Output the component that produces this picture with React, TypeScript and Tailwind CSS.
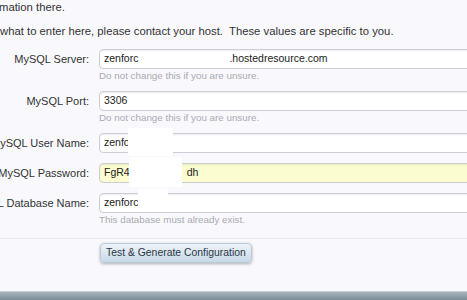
const rows = [
  { label: "MySQL Server:", hint: "Do not change this if you are unsure." },
  { label: "MySQL Port:", hint: "Do not change this if you are unsure." },
  { label: "MySQL User Name:" },
  { label: "MySQL Password:" },
  { label: "MySQL Database Name:", hint: "This database must already exist." },
];

function FieldValue({ index }: { index: number }) {
  if (index === 0) {
    return (
      <>
        <span>zenforc</span>
        <span className="ml-[91px]">.hostedresource.com</span>
      </>
    );
  }
  if (index === 1) return <span>3306</span>;
  if (index === 2) return <span>zenforc</span>;
  if (index === 3) {
    return (
      <>
        <span>FgR4</span>
        <span className="ml-[57px]">dh</span>
      </>
    );
  }
  return <span>zenforc</span>;
}

export default function App() {
  return (
    <div
      className="relative w-[467px] h-[300px] overflow-hidden bg-[#f9f9fd] text-[#333] flex flex-col"
      style={{ fontFamily: '"Liberation Sans", Arial, sans-serif' }}
    >
      <p className="text-[11.3px] leading-[13px] pt-[1px] -ml-[1px] whitespace-nowrap">mation there.</p>
      <p className="text-[11.3px] leading-[13px] mt-[11px] whitespace-nowrap">
        what to enter here, please contact your host.&nbsp; These values are specific to you.
      </p>

      <div className="flex flex-col gap-[10px] mt-[11px]">
        {rows.map((row, i) => (
          <div key={row.label} className="flex items-start">
            <div className="w-[90px] shrink-0 flex justify-end h-[20px] items-center pr-[1px]">
              <span className="whitespace-nowrap text-[11px]">{row.label}</span>
            </div>
            <div className="ml-[9px] flex flex-col">
              <div
                className={`w-[400px] h-[20px] rounded-l-[4px] border border-[#cdcdd6] shadow-[inset_0_1px_2px_rgba(0,0,0,0.08)] flex items-center px-[4px] text-[10.5px] text-[#222] whitespace-nowrap ${
                  i === 3 ? "bg-[#fbfccf]" : "bg-white"
                }`}
              >
                <FieldValue index={i} />
              </div>
              {row.hint && (
                <p className="mt-[1px] text-[9.8px] leading-[11px] text-[#a9a9b3] whitespace-nowrap">{row.hint}</p>
              )}
            </div>
          </div>
        ))}
      </div>

      <div className="mt-[13px] border-t border-[#e8e8ee] flex-1 flex flex-col">
        <div className="pt-[4px] pl-[100px] flex">
          <button className="h-[20px] px-[5px] leading-[18px] rounded-[4px] border border-[#b9c9d6] bg-gradient-to-b from-[#eef4f9] to-[#c7d8e6] shadow-[0_1px_3px_rgba(0,0,0,0.3)] text-[10.4px] text-[#2a3644] whitespace-nowrap">
            Test &amp; Generate Configuration
          </button>
        </div>
        <div className="mt-auto h-[9px] border-t border-[#c9d1d6] bg-gradient-to-b from-[#a7b4bc] to-[#7c8c96]" />
      </div>

      {/* redacted patches in the screenshot */}
      <div className="absolute left-[128px] top-[128px] w-[45px] h-[28px] bg-white" />
      <div className="absolute left-[129px] top-[157px] w-[53px] h-[30px] bg-white" />
      <div className="absolute left-[138px] top-[189px] w-[30px] h-[23px] bg-white" />
    </div>
  );
}
